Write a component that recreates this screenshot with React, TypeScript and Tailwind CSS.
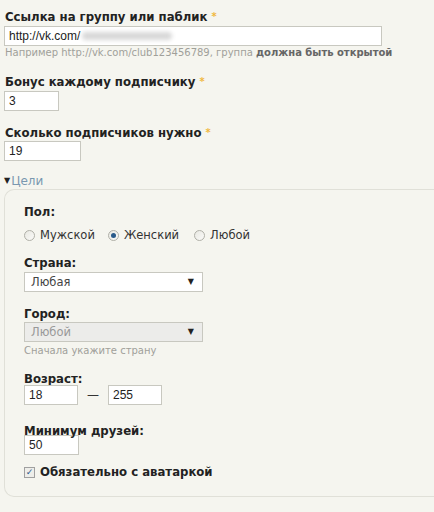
import React from 'react';

const verdana = { fontFamily: '"DejaVu Sans", Verdana, sans-serif' };

function Req() {
  return <span className="ml-1 align-top text-[11px] text-[#f0b840]">*</span>;
}

function Label({ children, required }: { children: React.ReactNode; required?: boolean }) {
  return (
    <div className="font-['DejaVu_Sans_Condensed','DejaVu_Sans',Tahoma,sans-serif] text-[13px] font-bold leading-[16px] text-[#222]">
      {children}
      {required && <Req />}
    </div>
  );
}

function TextInput({ value, width, children }: { value: string; width: string; children?: React.ReactNode }) {
  return (
    <div
      className={`${width} flex h-[20px] items-center border border-[#c8c8c0] bg-white px-[4px] font-['Liberation_Sans',Arial,sans-serif] text-[12px] text-[#222]`}
    >
      {value}
      {children}
    </div>
  );
}

function Radio({ checked }: { checked?: boolean }) {
  return (
    <span className="flex h-[11px] w-[11px] items-center justify-center rounded-full border border-[#b0b0a8] bg-gradient-to-br from-[#e8e8e2] to-[#fafaf8]">
      {checked && <span className="h-[5px] w-[5px] rounded-full bg-[#2a5a8a]" />}
    </span>
  );
}

function Select({ value, disabled }: { value: string; disabled?: boolean }) {
  return (
    <div
      className={`flex h-[20px] w-[179px] items-center justify-between border border-[#c8c8c0] px-[6px] text-[11.5px] ${
        disabled ? 'bg-[#ececea] text-[#999]' : 'bg-white text-[#444]'
      }`}
    >
      <span>{value}</span>
      <span className="mr-[2px] text-[8px] text-[#222]">▼</span>
    </div>
  );
}

export default function App() {
  return (
    <div className="min-h-[512px] w-[434px] bg-[#f5f5ef] pt-[9px]" style={verdana}>
      {/* link to group */}
      <div className="px-[5px]">
        <Label required>Ссылка на группу или паблик</Label>
      </div>
      <div className="mt-[1px] px-[4px]">
        <TextInput value="http://vk.com/" width="w-[378px]">
          <span className="ml-[2px] h-[8px] w-[90px] rounded-full bg-[#d8d8d8] blur-[2px]" />
        </TextInput>
      </div>
      <div className="whitespace-nowrap px-[5px] text-[10px] leading-[13px] text-[#a0a09a]">
        Например http://vk.com/club123456789, группа{' '}
        <span className="font-bold text-[#666]">должна быть открытой</span>
      </div>

      {/* bonus */}
      <div className="mt-[15px] px-[5px]">
        <Label required>Бонус каждому подписчику</Label>
      </div>
      <div className="mt-[1px] px-[4px]">
        <TextInput value="3" width="w-[55px]" />
      </div>

      {/* subscribers */}
      <div className="mt-[14px] px-[5px]">
        <Label required>Сколько подписчиков нужно</Label>
      </div>
      <div className="px-[4px]">
        <TextInput value="19" width="w-[77px]" />
      </div>

      {/* targeting */}
      <div className="mt-[13px] flex items-center px-[4px] text-[12px] leading-[14px] text-[#7a98b0]">
        <span className="mr-[1px] text-[8px] text-[#222]">▼</span>
        Цели
      </div>
      <div className="ml-[4px] mt-[1px] h-[308px] rounded-l-[10px] border border-r-0 border-[#e0e0d8] pl-[19px] pt-[14px]">
        <Label>Пол:</Label>
        <div className="mt-[7px] flex items-center text-[11.5px] text-[#333]">
          <Radio />
          <span className="ml-[5px]">Мужской</span>
          <span className="ml-[13px]">
            <Radio checked />
          </span>
          <span className="ml-[5px]">Женский</span>
          <span className="ml-[15px]">
            <Radio />
          </span>
          <span className="ml-[5px]">Любой</span>
        </div>

        <div className="mt-[11px]">
          <Label>Страна:</Label>
        </div>
        <div className="mt-[1px]">
          <Select value="Любая" />
        </div>

        <div className="mt-[14px]">
          <Label>Город:</Label>
        </div>
        <Select value="Любой" disabled />
        <div className="mt-[2px] text-[10px] leading-[13px] text-[#a0a09a]">Сначала укажите страну</div>

        <div className="mt-[14px]">
          <Label>Возраст:</Label>
        </div>
        <div className="-mt-[2px] flex items-center">
          <TextInput value="18" width="w-[54px]" />
          <span className="mx-[9px] text-[12px] text-[#333]">—</span>
          <TextInput value="255" width="w-[54px]" />
        </div>

        <div className="mt-[18px]">
          <Label>Минимум друзей:</Label>
        </div>
        <div className="-mt-[4px]">
          <TextInput value="50" width="w-[55px]" />
        </div>

        <div className="mt-[7px] flex items-center">
          <span className="flex h-[11px] w-[11px] items-center justify-center border border-[#a0a0a0] bg-[#eeeeea] text-[9px] leading-none text-[#2a5a8a]">
            ✓
          </span>
          <span className="ml-[5px] font-['DejaVu_Sans_Condensed','DejaVu_Sans',Tahoma,sans-serif] text-[13px] font-bold text-[#222]">
            Обязательно с аватаркой
          </span>
        </div>
      </div>
    </div>
  );
}
